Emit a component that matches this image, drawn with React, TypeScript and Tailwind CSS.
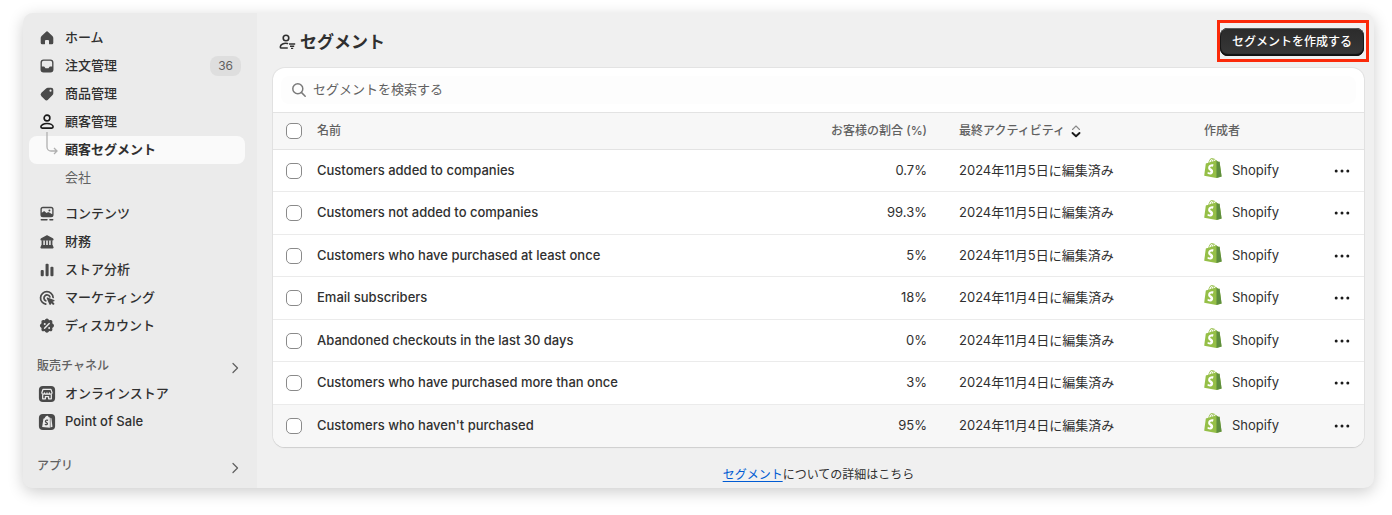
import React from 'react';
import { clsx } from 'clsx';

type IconProps = { children: React.ReactNode };

const Icon: React.FC<IconProps> = ({ children }) => (
  <svg viewBox="0 0 20 20" className="size-[18px] shrink-0" fill="currentColor" aria-hidden="true">
    {children}
  </svg>
);

const HomeIcon = () => (
  <Icon>
    <path d="M8.7 3.2a1.9 1.9 0 0 1 2.6 0l4.700 4.500c.7.600 1 1.400 1 2.300v5.300a1.700 1.700 0 0 1-1.700 1.700h-2.100a1 1 0 0 1-1-1v-2.700c0-.7-.5-1.200-1.200-1.200H9c-.7 0-1.200.5-1.200 1.200V16a1 1 0 0 1-1 1H4.700A1.700 1.700 0 0 1 3 15.300V10c0-.9.3-1.700 1-2.300z" />
  </Icon>
);

const OrderIcon = () => (
  <Icon>
    <path
      fillRule="evenodd"
      d="M6.2 2.8h7.6a3.4 3.4 0 0 1 3.4 3.4v7.6a3.4 3.4 0 0 1-3.4 3.4H6.2a3.4 3.4 0 0 1-3.4-3.4V6.2a3.4 3.4 0 0 1 3.4-3.4Zm.1 1.500a2 2 0 0 0-2 2v4.300h2.200c.5 0 .9.3 1.100.7l.3.6c.2.4.6.7 1.100.7h2c.5 0 .9-.3 1.100-.7l.3-.6c.2-.4.6-.7 1.100-.7h2.200V6.300a2 2 0 0 0-2-2z"
    />
  </Icon>
);

const ProductIcon = () => (
  <Icon>
    <path
      fillRule="evenodd"
      d="M11 3h3.600A2.400 2.400 0 0 1 17 5.400v3.800c0 .8-.3 1.500-.8 2l-4.900 5a2.700 2.700 0 0 1-3.800 0l-3.700-3.700a2.700 2.700 0 0 1 0-3.800L9 3.800A2.800 2.800 0 0 1 11 3Zm2.900 4.500a1.200 1.200 0 1 0 0-2.400 1.200 1.200 0 0 0 0 2.400Z"
    />
  </Icon>
);

const CustomerIcon = () => (
  <Icon>
    <g fill="none" stroke="#1a1a1a" strokeWidth="1.8">
      <circle cx="10" cy="5.6" r="3.2" />
      <path d="M3.200 15.400c0-2.200 3.300-3.700 6.800-3.700s6.800 1.500 6.800 3.700c0 .8-.6 1.400-1.400 1.400H4.600c-.8 0-1.400-.6-1.400-1.400Z" />
    </g>
  </Icon>
);

const ContentIcon = () => (
  <Icon>
    <path
      fillRule="evenodd"
      d="M5.500 2h9A2.800 2.800 0 0 1 17.300 4.800v6a2.800 2.800 0 0 1-2.800 2.800h-9a2.800 2.800 0 0 1-2.800-2.800v-6A2.800 2.800 0 0 1 5.500 2Zm.2 1.500c-.9 0-1.500.6-1.500 1.500v3.700l1.900-1.400c.5-.4 1.200-.4 1.700.1l1.700 1.500 1.500-.8c.5-.3 1.100-.2 1.500.1l3.300 2V5c0-.9-.6-1.500-1.500-1.500zm7 3.700a1.100 1.100 0 1 0 0-2.200 1.100 1.100 0 0 0 0 2.200Z"
    />
    <rect x="2.8" y="15.5" width="8" height="1.8" rx=".9" />
    <rect x="12.4" y="15.5" width="4.8" height="1.8" rx=".9" />
  </Icon>
);

const FinanceIcon = () => (
  <Icon>
    <path d="M9.200 2.700c.5-.3 1.100-.3 1.600 0l5.700 3.100c.5.300.8.7.8 1.300 0 .8-.5 1.300-1.200 1.300H3.900c-.7 0-1.200-.5-1.200-1.300 0-.6.3-1 .8-1.300z" />
    <path d="M4 8h1.900v6H4zM7.600 8h1.500v6H7.600zM10.900 8h1.500v6h-1.500zM14.100 8H16v6h-1.900z" />
    <path d="M3.800 13.400h12.400l1 2.200a1 1 0 0 1-.9 1.500H3.700a1 1 0 0 1-.9-1.500z" />
  </Icon>
);

const AnalyticsIcon = () => (
  <Icon>
    <rect x="3" y="10" width="3.4" height="7" rx="1.2" />
    <rect x="8.4" y="3" width="3.4" height="14" rx="1.2" />
    <rect x="13.8" y="6.3" width="3.4" height="10.7" rx="1.2" />
  </Icon>
);

const MarketingIcon = () => (
  <Icon>
    <g fill="none" stroke="currentColor" strokeWidth="1.9" strokeLinecap="round">
      <path d="M16.800 9.400A7 7 0 1 0 8.600 16.900" />
      <path d="M13.200 8.800A3.400 3.400 0 1 0 8.600 13.100" />
    </g>
    <path d="M9.700 10.400c-.2-.6.300-1.100.9-.9l7.300 2.700c.7.300.7 1.200 0 1.400l-1.600.6 1.700 1.700c.8.800-.6 2.300-1.500 1.500l-1.700-1.700-.6 1.600c-.3.700-1.200.6-1.500 0z" />
  </Icon>
);

const DiscountIcon = () => (
  <Icon>
    <path d="M10 1.800c.7 0 1.200.3 1.600.8l.8 1 1.300-.2c1.400-.2 2.500.9 2.300 2.300l-.2 1.300 1.100.8c1.200.9 1.200 2.700 0 3.600l-1.100.8.2 1.300c.2 1.400-.9 2.500-2.300 2.300l-1.300-.2-.8 1.100c-.9 1.200-2.500 1.200-3.400 0l-.8-1.100-1.300.2c-1.400.2-2.500-.9-2.300-2.300l.2-1.300-1-.8c-1.200-.9-1.200-2.700 0-3.600l1-.8-.2-1.300C3.600 4.300 4.700 3.200 6.100 3.400l1.300.2.8-1c.4-.5 1-.8 1.800-.8Z" />
    <path d="m7.300 12.500 5.200-5.200" stroke="#ebebeb" strokeWidth="1.6" strokeLinecap="round" />
    <circle cx="7.5" cy="7.7" r="1.100" fill="#ebebeb" />
    <circle cx="12.4" cy="12.2" r="1.100" fill="#ebebeb" />
  </Icon>
);

const StoreIcon = () => (
  <Icon>
    <rect x="1" y="1" width="18" height="18" rx="4.5" />
    <g fill="none" stroke="#ebebeb" strokeWidth="1.4" strokeLinejoin="round">
      <path d="M5.600 4.800h8.800l1.200 3.700c0 1-.7 1.700-1.500 1.700s-1.400-.6-1.400-1.400c0 .8-.6 1.400-1.400 1.400S10 9.600 10 8.800c0 .8-.6 1.400-1.400 1.400s-1.400-.6-1.400-1.400c0 .8-.6 1.400-1.400 1.400s-1.500-.7-1.500-1.700z" />
      <path d="M5.200 10.200v5.200h3v-2.600h3.600v2.600h3v-5.200" />
    </g>
  </Icon>
);

const PosIcon = () => (
  <Icon>
    <rect x="1" y="1" width="18" height="18" rx="4.5" />
    <path d="M6 6.300 7.400 5.800C8 4 9 3 10.200 3c.8 0 1.500.7 1.800 1.800l1.200.2v11.300L4.600 15.500z" fill="#ebebeb" />
    <path d="m13.800 5.300 1.100.4 1.200 9.700-2.300.8z" fill="#ebebeb" />
    <path d="M11.200 8.200c-1.600-.7-3-.1-3 1.100 0 1.400 2.300 1.300 2.300 2.700 0 1.100-1.500 1.400-2.900.5" fill="none" stroke="#4a4a4a" strokeWidth="1.4" />
  </Icon>
);

const SegmentIcon = () => (
  <svg viewBox="0 0 18 18" className="size-[18px] shrink-0" fill="none" stroke="#303030" aria-hidden="true">
    <circle cx="8" cy="5" r="2.8" strokeWidth="1.6" />
    <path d="M9.500 10.500c-3.600-.7-7.200.9-7.200 3.400 0 .7.500 1.100 1.100 1.100h5.800" strokeWidth="1.6" strokeLinecap="round" />
    <path d="M11 11h6.200M12 13.200h4.200M13 15.400h2.200" strokeWidth="1.4" />
  </svg>
);

const ShopifyBag = () => (
  <svg viewBox="0 0 109.5 124.5" className="mb-1.5 h-5 w-[18px] shrink-0" aria-hidden="true">
    <path
      fill="#95bf47"
      d="M95.900 23.900c-.1-.6-.6-1-1.100-1-.5 0-9.300-.2-9.300-.2s-7.400-7.200-8.100-7.900c-.7-.7-2.200-.5-2.700-.3 0 0-1.400.4-3.700 1.100-.4-1.300-1-2.800-1.800-4.400-2.600-5-6.500-7.700-11.100-7.700-.3 0-.6 0-1 .1-.1-.2-.3-.3-.4-.5-2-2.200-4.600-3.200-7.700-3.100-6 .2-12 4.500-16.800 12.200-3.400 5.400-6 12.200-6.700 17.500-6.900 2.100-11.700 3.600-11.800 3.700-3.500 1.100-3.600 1.200-4 4.500C9.400 40.400.2 110.800.2 110.800l75.600 13.100 32.800-8.100c0 0-12.600-91.300-12.700-91.900zM67.500 16.800c-1.800.5-3.700 1.100-5.800 1.800 0-3-.4-7.300-1.800-10.900 4.600.9 6.900 6.100 7.600 9.100zm-9.900 3.100c-4 1.200-8.400 2.600-12.700 3.900 1.200-4.700 3.600-9.400 6.400-12.500 1.100-1.100 2.600-2.400 4.300-3.200 1.700 3.500 2.100 8.500 2 11.800zM49.500 4.300c1.400 0 2.600.3 3.600.9-1.600.8-3.200 2.100-4.700 3.600-3.800 4.100-6.700 10.500-7.900 16.600-3.600 1.100-7.200 2.200-10.500 3.200C32.200 19.100 40.300 4.500 49.500 4.300z"
    />
    <path fill="#5e8e3e" d="M94.800 22.900c-.5 0-9.300-.2-9.300-.2s-7.400-7.200-8.100-7.900c-.3-.3-.6-.4-1-.5v109.500l32.800-8.100s-13.200-90.700-13.300-91.300c-.1-.6-.6-1.100-1.100-1.500z" />
    <path
      fill="#fff"
      d="M58 39.900l-3.800 14.400s-4.300-2-9.400-1.600c-7.500.5-7.500 5.200-7.500 6.400.4 6.400 17.300 7.800 18.300 22.900.7 11.900-6.300 20-16.400 20.600-12.200.8-18.900-6.400-18.900-6.400l2.600-11s6.700 5.100 12.100 4.700c3.500-.2 4.800-3.100 4.700-5.100-.5-8.400-14.300-7.900-15.200-21.700-.7-11.600 6.900-23.400 23.700-24.400 6.500-.5 9.800 1.200 9.800 1.200z"
    />
  </svg>
);

const mainNav = [
  { label: 'ホーム', icon: <HomeIcon /> },
  { label: '注文管理', icon: <OrderIcon />, count: 36 },
  { label: '商品管理', icon: <ProductIcon /> },
  { label: '顧客管理', icon: <CustomerIcon /> },
];

const secondaryNav = [
  { label: 'コンテンツ', icon: <ContentIcon /> },
  { label: '財務', icon: <FinanceIcon /> },
  { label: 'ストア分析', icon: <AnalyticsIcon /> },
  { label: 'マーケティング', icon: <MarketingIcon /> },
  { label: 'ディスカウント', icon: <DiscountIcon /> },
];

const channels = [
  { label: 'オンラインストア', icon: <StoreIcon /> },
  { label: 'Point of Sale', icon: <PosIcon /> },
];

const segments = [
  { name: 'Customers added to companies', share: '0.7%', activity: '2024年11月5日に編集済み' },
  { name: 'Customers not added to companies', share: '99.3%', activity: '2024年11月5日に編集済み' },
  { name: 'Customers who have purchased at least once', share: '5%', activity: '2024年11月5日に編集済み' },
  { name: 'Email subscribers', share: '18%', activity: '2024年11月4日に編集済み' },
  { name: 'Abandoned checkouts in the last 30 days', share: '0%', activity: '2024年11月4日に編集済み' },
  { name: 'Customers who have purchased more than once', share: '3%', activity: '2024年11月4日に編集済み' },
  { name: "Customers who haven't purchased", share: '95%', activity: '2024年11月4日に編集済み' },
];

type NavItemProps = { label: string; icon: React.ReactNode; count?: number };

const NavItem: React.FC<NavItemProps> = ({ label, icon, count }) => (
  <li>
    <a href="#" className="flex h-7 items-center gap-[9px] rounded-lg pr-1 pl-[9px] font-medium text-[#303030]">
      <span className="text-[#4a4a4a]">{icon}</span>
      <span className="flex-1">{label}</span>
      {count !== undefined && (
        <span className="rounded-lg bg-[#dedede] px-2 text-xs leading-5 font-normal text-[#616161]">{count}</span>
      )}
    </a>
  </li>
);

const SectionButton: React.FC<{ label: string }> = ({ label }) => (
  <button type="button" className="flex h-7 w-full items-center justify-between pr-1 pl-2 text-xs font-medium text-[#616161]">
    {label}
    <svg viewBox="0 0 12 12" className="mt-1 size-3" fill="none" stroke="#616161" strokeWidth="1.3" strokeLinecap="round" strokeLinejoin="round" aria-hidden="true">
      <path d="m4 1.500 4.500 4.500L4 10.500" />
    </svg>
  </button>
);

const Checkbox: React.FC<{ label: string }> = ({ label }) => (
  <input
    type="checkbox"
    aria-label={label}
    className="block size-4 appearance-none rounded-[5px] border border-[#8a8a8a] bg-white checked:bg-[#303030]"
  />
);

const Sidebar = () => (
  <nav className="w-[234px] shrink-0 bg-[#ebebeb] pt-[11px] pr-3 pb-2 pl-1.5 text-[13px]">
    <ul>
      {mainNav.map(item => (
        <NavItem key={item.label} {...item} />
      ))}
      <li>
        <a href="#" aria-current="page" className="flex h-7 items-center gap-[9px] rounded-lg bg-[#fafafa] pl-[9px] font-semibold text-[#303030]">
          <svg viewBox="0 0 18 28" className="h-7 w-[18px] shrink-0 overflow-visible" fill="none" stroke="#b0b0b0" strokeWidth="1.3" aria-hidden="true">
            <path d="M9 -4V11a4 4 0 0 0 4 4h6M16 12l3 3-3 3" />
          </svg>
          顧客セグメント
        </a>
      </li>
      <li>
        <a href="#" className="flex h-7 items-center pl-9 text-[#616161]">会社</a>
      </li>
    </ul>
    <ul className="mt-2">
      {secondaryNav.map(item => (
        <NavItem key={item.label} {...item} />
      ))}
    </ul>
    <div className="mt-3">
      <SectionButton label="販売チャネル" />
      <ul>
        {channels.map(item => (
          <NavItem key={item.label} {...item} />
        ))}
      </ul>
    </div>
    <div className="mt-4">
      <SectionButton label="アプリ" />
    </div>
  </nav>
);

const SegmentTable = () => (
  <table className="w-full table-fixed text-left text-[13px] text-[#303030]">
    <thead>
      <tr className="h-[37px] border-y border-[#e3e3e3] bg-[#f7f7f7] text-xs text-[#616161]">
        <th className="w-11 pl-[13px]">
          <Checkbox label="すべて選択" />
        </th>
        <th className="font-medium">名前</th>
        <th className="w-40 px-4 text-right font-medium">お客様の割合 (%)</th>
        <th className="w-[245px] px-4 font-medium">
          <button type="button" className="flex items-center gap-[5px]">
            最終アクティビティ
            <svg viewBox="0 0 12 14" className="h-3.5 w-3" fill="none" strokeLinecap="round" strokeLinejoin="round" aria-hidden="true">
              <path d="M2.500 5.500 6 2l3.500 3.500" stroke="#8a8a8a" strokeWidth="1.100" />
              <path d="M2.500 9 6 12.300 9.500 9" stroke="#1a1a1a" strokeWidth="1.9" />
            </svg>
          </button>
        </th>
        <th className="w-32 px-4 font-medium">作成者</th>
        <th className="w-12" aria-label="操作" />
      </tr>
    </thead>
    <tbody>
      {segments.map((segment, i) => (
        <tr
          key={segment.name}
          className={clsx(
            'odd:h-[42px] even:h-[43px]',
            i < segments.length - 1 ? 'border-b border-[#ebebeb]' : 'bg-[#f7f7f7]',
          )}
        >
          <td className="pl-[13px]">
            <Checkbox label={segment.name} />
          </td>
          <td className="font-medium">{segment.name}</td>
          <td className="px-4 text-right">{segment.share}</td>
          <td className="px-4 whitespace-nowrap">{segment.activity}</td>
          <td className="px-4">
            <span className="flex items-center gap-2.5">
              <ShopifyBag />
              Shopify
            </span>
          </td>
          <td className="pl-1">
            <button type="button" aria-label="その他の操作" className="mx-auto block">
              <svg viewBox="0 0 16 16" className="size-4" fill="#1a1a1a" aria-hidden="true">
                <circle cx="2.2" cy="8" r="1.500" />
                <circle cx="8" cy="8" r="1.500" />
                <circle cx="13.8" cy="8" r="1.500" />
              </svg>
            </button>
          </td>
        </tr>
      ))}
    </tbody>
  </table>
);

export default function App() {
  return (
    <div className="bg-white pt-[13px] pr-[18px] pb-[27px] pl-[23px] font-['Inter','Noto_Sans_CJK_JP',sans-serif]">
      <div className="flex overflow-hidden rounded-[10px] bg-[#f0f0f0] shadow-[0_4px_16px_rgba(0,0,0,0.2)]">
        <Sidebar />
        <main className="min-w-0 flex-1 pr-2.5 pl-4">
          <header className="flex items-center justify-between pt-[15px] pb-3">
            <h1 className="flex items-center gap-1 pl-[5px] text-[17px] leading-7 font-bold text-[#303030]">
              <SegmentIcon />
              セグメント
            </h1>
            <div className="relative">
              <button
                type="button"
                className="block h-7 rounded-lg bg-linear-to-b from-[#2b2b2b] to-[#383838] px-3 text-xs font-medium text-white shadow-[inset_0_1px_0_#5c5c5c,inset_0_-2px_1px_#111,inset_0_0_0_1px_#1a1a1a]"
              >
                セグメントを作成する
              </button>
              {/* Highlight frame around the primary action */}
              <div className="pointer-events-none absolute -top-2 -right-[5px] -bottom-1.5 -left-[3px] border-3 border-[#fb2a0a]" />
            </div>
          </header>

          <section className="overflow-hidden rounded-xl bg-white shadow-[0_1px_1px_#cfcfcf,0_0_0_1px_#e3e3e3]">
            <div className="p-2">
              <label className="flex h-7 items-center gap-1.5 rounded-lg bg-[#fdfdfd] pl-2.5">
                <svg viewBox="0 0 16 16" className="size-4 shrink-0" fill="none" stroke="#7a7a7a" strokeWidth="1.5" strokeLinecap="round" aria-hidden="true">
                  <circle cx="6.8" cy="6.8" r="5" />
                  <path d="m10.600 10.600 3.600 3.600" />
                </svg>
                <input
                  type="text"
                  aria-label="セグメントを検索する"
                  placeholder="セグメントを検索する"
                  className="min-w-0 flex-1 bg-transparent text-[13px] outline-none placeholder:text-[#616161]"
                />
              </label>
            </div>
            <SegmentTable />
          </section>

          <p className="pt-[18px] text-center text-xs leading-5 text-[#303030]">
            <a href="#" className="text-[#005bd3] underline underline-offset-2">セグメント</a>についての詳細はこちら
          </p>
        </main>
      </div>
    </div>
  );
}
